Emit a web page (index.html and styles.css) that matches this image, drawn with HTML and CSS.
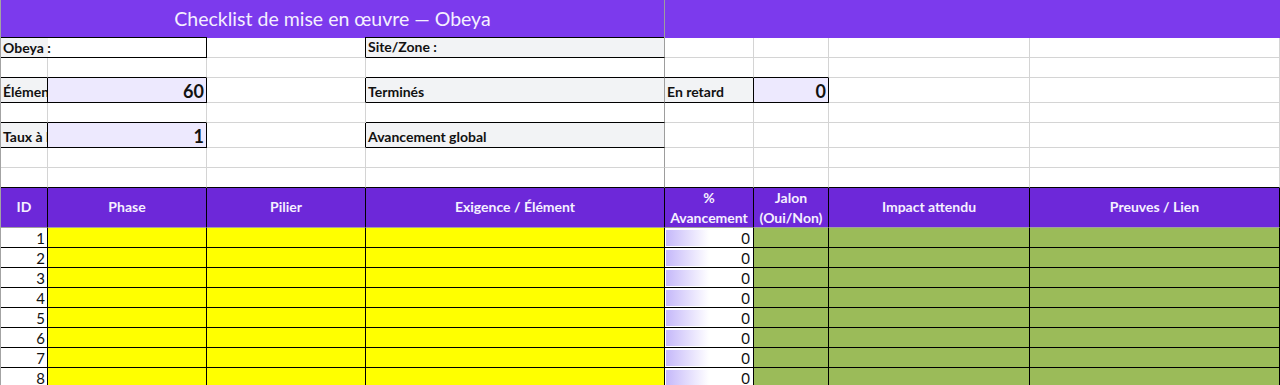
FILE: index.html
```html
<!DOCTYPE html>
<html lang="fr">
<head>
<meta charset="utf-8">
<title>Checklist de mise en œuvre — Obeya</title>
<link rel="stylesheet" href="styles.css">
</head>
<body>
<div class="sheet">
  <!-- row 1 -->
  <div class="c title span4">Checklist de mise en œuvre — Obeya</div>
  <div class="c title-r span4"></div>

  <!-- row 2 -->
  <div class="c lbl-ab span2 rb bb">Obeya :</div>
  <div class="c rb"></div>
  <div class="c gray lbl rf bb">Site/Zone :</div>
  <div class="c"></div>
  <div class="c"></div>
  <div class="c"></div>
  <div class="c"></div>

  <!-- row 3 -->
  <div class="c bb"></div>
  <div class="c bb"></div>
  <div class="c"></div>
  <div class="c rf bb"></div>
  <div class="c bb"></div>
  <div class="c bb"></div>
  <div class="c"></div>
  <div class="c"></div>

  <!-- row 4 -->
  <div class="c gray lbl rb bb">Éléments totaux</div>
  <div class="c lav val rb bb">60</div>
  <div class="c rb"></div>
  <div class="c gray lbl rf bb">Terminés</div>
  <div class="c gray lbl rb bb">En retard</div>
  <div class="c lav val rb bb">0</div>
  <div class="c"></div>
  <div class="c"></div>

  <!-- row 5 -->
  <div class="c bb"></div>
  <div class="c bb"></div>
  <div class="c"></div>
  <div class="c rf bb"></div>
  <div class="c"></div>
  <div class="c"></div>
  <div class="c"></div>
  <div class="c"></div>

  <!-- row 6 -->
  <div class="c gray lbl rb bb">Taux à l'heure</div>
  <div class="c lav val rb bb">1</div>
  <div class="c rb"></div>
  <div class="c gray lbl rf bb">Avancement global</div>
  <div class="c"></div>
  <div class="c"></div>
  <div class="c"></div>
  <div class="c"></div>

  <!-- row 7 -->
  <div class="c"></div>
  <div class="c"></div>
  <div class="c"></div>
  <div class="c rf"></div>
  <div class="c"></div>
  <div class="c"></div>
  <div class="c"></div>
  <div class="c"></div>

  <!-- row 8 -->
  <div class="c bb"></div>
  <div class="c bb"></div>
  <div class="c bb"></div>
  <div class="c rf bb"></div>
  <div class="c bb"></div>
  <div class="c bb"></div>
  <div class="c bb"></div>
  <div class="c bb"></div>

  <!-- header -->
  <div class="c hd">ID</div>
  <div class="c hd">Phase</div>
  <div class="c hd">Pilier</div>
  <div class="c hd">Exigence / Élément</div>
  <div class="c hd two">%<br>Avancement</div>
  <div class="c hd two">Jalon<br>(Oui/Non)</div>
  <div class="c hd">Impact attendu</div>
  <div class="c hd">Preuves / Lien</div>

  <!-- data rows -->
  <div class="c d num">1</div><div class="c d yel"></div><div class="c d yel"></div><div class="c d yel"></div>
  <div class="c d pct"><span class="bar"></span><span>0</span></div><div class="c d grn"></div><div class="c d grn"></div><div class="c d grn"></div>

  <div class="c d num">2</div><div class="c d yel"></div><div class="c d yel"></div><div class="c d yel"></div>
  <div class="c d pct"><span class="bar"></span><span>0</span></div><div class="c d grn"></div><div class="c d grn"></div><div class="c d grn"></div>

  <div class="c d num">3</div><div class="c d yel"></div><div class="c d yel"></div><div class="c d yel"></div>
  <div class="c d pct"><span class="bar"></span><span>0</span></div><div class="c d grn"></div><div class="c d grn"></div><div class="c d grn"></div>

  <div class="c d num">4</div><div class="c d yel"></div><div class="c d yel"></div><div class="c d yel"></div>
  <div class="c d pct"><span class="bar"></span><span>0</span></div><div class="c d grn"></div><div class="c d grn"></div><div class="c d grn"></div>

  <div class="c d num">5</div><div class="c d yel"></div><div class="c d yel"></div><div class="c d yel"></div>
  <div class="c d pct"><span class="bar"></span><span>0</span></div><div class="c d grn"></div><div class="c d grn"></div><div class="c d grn"></div>

  <div class="c d num">6</div><div class="c d yel"></div><div class="c d yel"></div><div class="c d yel"></div>
  <div class="c d pct"><span class="bar"></span><span>0</span></div><div class="c d grn"></div><div class="c d grn"></div><div class="c d grn"></div>

  <div class="c d num">7</div><div class="c d yel"></div><div class="c d yel"></div><div class="c d yel"></div>
  <div class="c d pct"><span class="bar"></span><span>0</span></div><div class="c d grn"></div><div class="c d grn"></div><div class="c d grn"></div>

  <div class="c d num">8</div><div class="c d yel"></div><div class="c d yel"></div><div class="c d yel"></div>
  <div class="c d pct"><span class="bar"></span><span>0</span></div><div class="c d grn"></div><div class="c d grn"></div><div class="c d grn"></div>
</div>
</body>
</html>
```
FILE: styles.css
```css
html, body {
  margin: 0;
  padding: 0;
  background: #ffffff;
  overflow: hidden;
}

.sheet {
  display: grid;
  grid-template-columns: 47px 159px 159px 299px 89px 75px 201px 250px;
  grid-template-rows: 38px 20px 20px 25px 20px 25px 20px 20px 40px repeat(8, 20px);
  border-left: 1px solid #a3a3a3;
  font-family: Lato, "Liberation Sans", sans-serif;
  color: #111111;
  width: 1279px;
}

.c {
  box-sizing: border-box;
  border-right: 1px solid #d4d4d4;
  border-bottom: 1px solid #d4d4d4;
  display: flex;
  align-items: flex-end;
  padding: 0 3px 1px 3px;
  white-space: nowrap;
  overflow: hidden;
  min-width: 0;
  font-size: 14px;
  line-height: 17px;
}

.span2 { grid-column: span 2; }
.span4 { grid-column: span 4; }

.rb { border-right-color: #000000; }
.bb { border-bottom-color: #000000; }
.rf { border-right-color: #9d9d9d; }

.title {
  background:
    linear-gradient(to right, #000000 206px, transparent 206px, transparent 364px, #000000 364px) left bottom / 100% 1px no-repeat,
    #7c3aed;
  color: #f4efff;
  font-size: 19.5px;
  font-weight: 400;
  justify-content: center;
  align-items: center;
  padding: 0 0 1px 0;
  border-right-color: #9d9d9d;
  border-bottom-width: 0;
}

.title-r {
  background: #7c3aed;
  border-right-width: 0;
  border-bottom-width: 0;
}

.lbl, .lbl-ab {
  font-weight: 700;
  padding-left: 2px;
}

.lbl-ab {
  background: linear-gradient(to right, #f2f3f5 47px, #ffffff 47px);
}

.gray { background: #f2f3f5; }
.lav { background: #ede9fe; }

.val {
  justify-content: flex-end;
  font-weight: 700;
  font-size: 18px;
  line-height: 21px;
  padding-right: 2px;
  padding-bottom: 0;
}

.gray.lbl { padding-bottom: 2px; }

.hd {
  background: #6d28d9;
  color: #f5f0ff;
  font-weight: 700;
  font-size: 14px;
  justify-content: center;
  align-items: center;
  text-align: center;
  border-right-color: #000000;
  border-bottom-color: #a0a0a0;
  padding: 0 1px 2px 1px;
}

.hd.two {
  line-height: 20px;
  padding-bottom: 0;
}

.d {
  border-right-color: #000000;
  border-bottom-color: #000000;
  font-size: 15px;
  line-height: 18px;
  padding-bottom: 0;
}

.num {
  justify-content: flex-end;
  padding-right: 2px;
}

.yel { background: #ffff00; }
.grn { background: #9bbb59; }

.pct {
  justify-content: space-between;
  padding-left: 1px;
  padding-right: 3px;
}

.bar {
  align-self: center;
  width: 43px;
  height: 16px;
  background: linear-gradient(to right, #c5b8fa, #ffffff);
}
```
